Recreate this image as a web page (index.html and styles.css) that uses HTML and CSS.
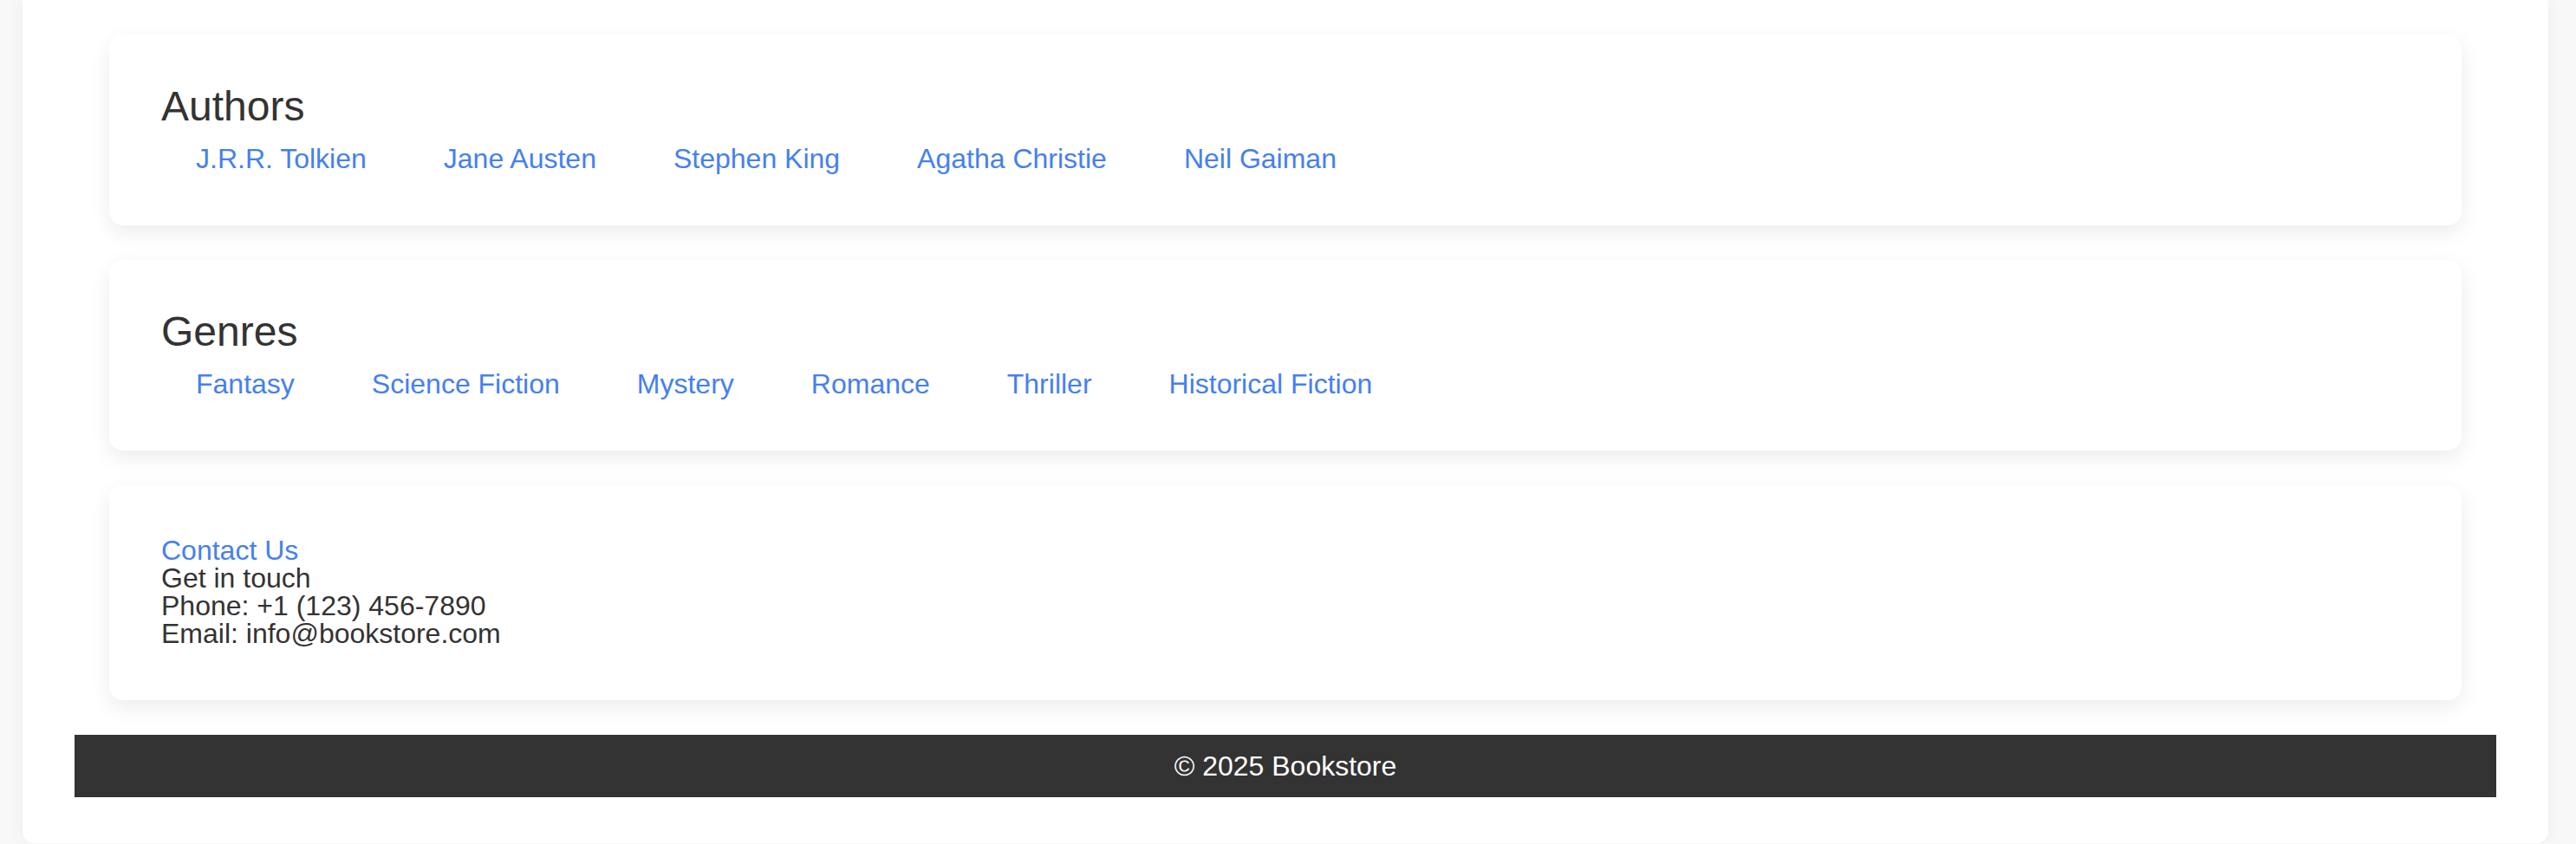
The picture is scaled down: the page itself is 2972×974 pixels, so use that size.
FILE: index.html
```html
<!DOCTYPE html>
<html lang="en">
<head>
<meta charset="utf-8">
<title>Bookstore</title>
<link rel="stylesheet" href="styles.css">
</head>
<body>
<div class="page">
  <section class="card">
    <h2 class="card-title">Authors</h2>
    <nav class="links">
      <a href="#">J.R.R. Tolkien</a>
      <a href="#">Jane Austen</a>
      <a href="#">Stephen King</a>
      <a href="#">Agatha Christie</a>
      <a href="#">Neil Gaiman</a>
    </nav>
  </section>
  <section class="card">
    <h2 class="card-title">Genres</h2>
    <nav class="links">
      <a href="#">Fantasy</a>
      <a href="#">Science Fiction</a>
      <a href="#">Mystery</a>
      <a href="#">Romance</a>
      <a href="#">Thriller</a>
      <a href="#">Historical Fiction</a>
    </nav>
  </section>
  <section class="card contact">
    <a class="contact-link" href="#">Contact Us</a>
    <p class="contact-line">Get in touch</p>
    <p class="contact-line">Phone: +1 (123) 456-7890</p>
    <p class="contact-line">Email: info@bookstore.com</p>
  </section>
  <footer class="footer">© 2025 Bookstore</footer>
</div>
</body>
</html>
```

FILE: styles.css
```css
html, body {
  margin: 0;
  padding: 0;
}
body {
  background: #f8f8f8;
  font-family: "Liberation Sans", Arial, Helvetica, sans-serif;
  color: #333333;
  font-size: 32px;
  line-height: 1;
}
.page {
  margin-left: 26px;
  width: 2914px;
  box-sizing: border-box;
  padding: 40px 60px 53px;
  background: #ffffff;
  border-radius: 0 0 14px 14px;
  box-shadow: 0 0 20px rgba(0, 0, 0, 0.05);
  display: flex;
  flex-direction: column;
  gap: 40px;
}
.card {
  margin: 0 40px;
  padding: 59px 60px 61px;
  background: #ffffff;
  border-radius: 16px;
  box-shadow: 0 8px 24px rgba(0, 0, 0, 0.08);
}
.card-title {
  margin: 0 0 20px;
  font-size: 48px;
  font-weight: normal;
  line-height: 48px;
  color: #333333;
}
.links {
  display: flex;
  gap: 9px;
}
.links a {
  padding: 0 40px;
  color: #4580f0;
  text-decoration: none;
  line-height: 32px;
}
.contact {
  display: flex;
  flex-direction: column;
}
.contact-link {
  color: #4580f0;
  text-decoration: none;
  line-height: 32px;
}
.contact-line {
  margin: 0;
  line-height: 32px;
}
.footer {
  margin: 0;
  padding: 20px 0;
  background: #333333;
  color: #ffffff;
  text-align: center;
  line-height: 32px;
}
```
